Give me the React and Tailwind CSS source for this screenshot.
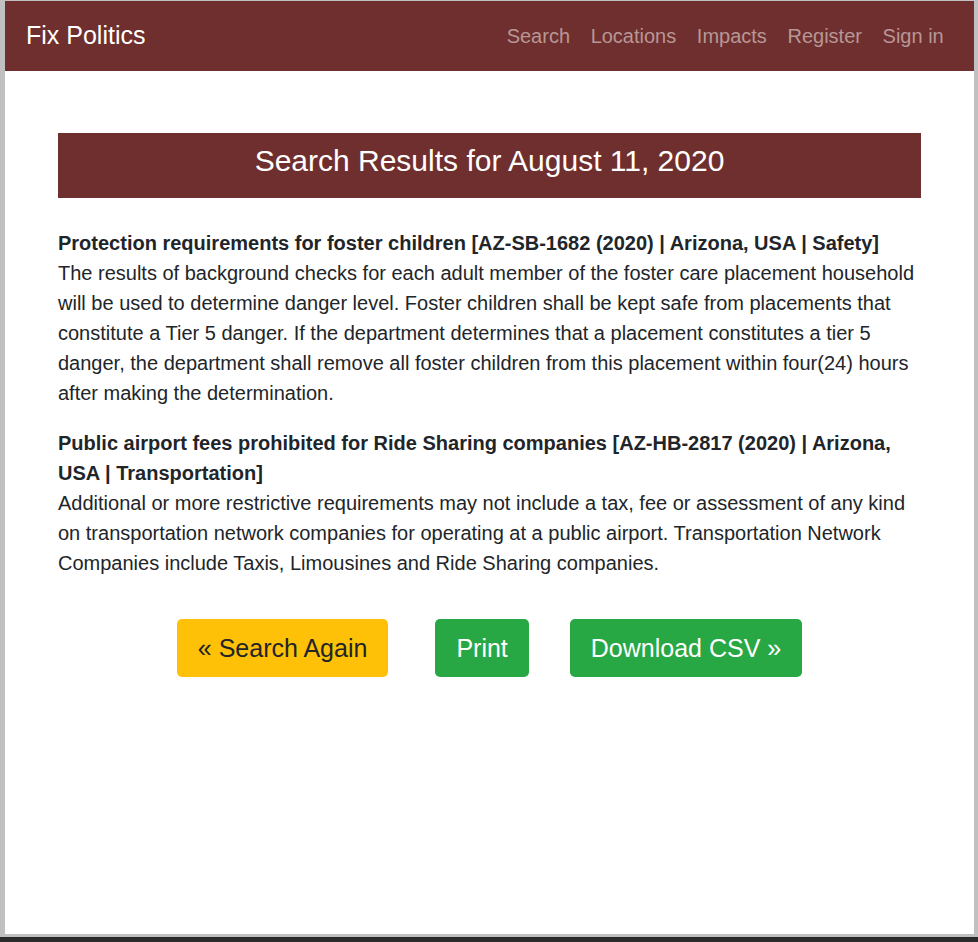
import React from "react";

const links = ["Search", "Locations", "Impacts", "Register", "Sign in"];

const results = [
  {
    title:
      "Protection requirements for foster children [AZ-SB-1682 (2020) | Arizona, USA | Safety]",
    body:
      "The results of background checks for each adult member of the foster care placement household will be used to determine danger level. Foster children shall be kept safe from placements that constitute a Tier 5 danger. If the department determines that a placement constitutes a tier 5 danger, the department shall remove all foster children from this placement within four(24) hours after making the determination.",
  },
  {
    title:
      "Public airport fees prohibited for Ride Sharing companies [AZ-HB-2817 (2020) | Arizona, USA | Transportation]",
    body:
      "Additional or more restrictive requirements may not include a tax, fee or assessment of any kind on transportation network companies for operating at a public airport. Transportation Network Companies include Taxis, Limousines and Ride Sharing companies.",
  },
];

const App = () => {
  return (
    <div className="h-[942px] w-[978px] flex flex-col bg-[#2b2b2b] overflow-hidden font-['Liberation_Sans',Arial,sans-serif]">
      <div className="h-[937px] shrink-0 border-l-[5px] border-r-[4px] border-t border-b-[3px] border-[#c0c0c0] bg-white">
        {/* Navbar */}
        <nav className="h-[70px] bg-[#6f2f2e] flex items-center justify-between pl-[21px] pr-[20px]">
          <span className="text-[25px] text-white">Fix Politics</span>
          <ul className="flex pl-[4px]">
            {links.map((l) => (
              <li key={l} className="px-[10.3px] text-[20px] text-[#b79796]">
                {l}
              </li>
            ))}
          </ul>
        </nav>

        {/* Content */}
        <main className="px-[53px] pt-[62px]">
          <div className="bg-[#6f2f2e] h-[65px] flex justify-center pt-[10px]">
            <h3 className="text-[30px] leading-[36px] text-white">
              Search Results for August 11, 2020
            </h3>
          </div>

          <div className="mt-[30px] text-[20px] leading-[30px] text-[#212529]">
            {results.map((r) => (
              <p key={r.title} className="mb-[20px]">
                <b>{r.title}</b>
                <br />
                {r.body}
              </p>
            ))}
          </div>

          {/* Buttons */}
          <div className="flex justify-center mt-[41px] text-[25px] leading-[38px]">
            <button className="bg-[#ffc107] text-[#212529] rounded-[5px] px-[21px] py-[10px]">
              « Search Again
            </button>
            <button className="ml-[47px] bg-[#28a745] text-white rounded-[5px] px-[21px] py-[10px]">
              Print
            </button>
            <button className="ml-[41px] bg-[#28a745] text-white rounded-[5px] px-[21px] py-[10px]">
              Download CSV »
            </button>
          </div>
        </main>
      </div>
    </div>
  );
};

export default App;
